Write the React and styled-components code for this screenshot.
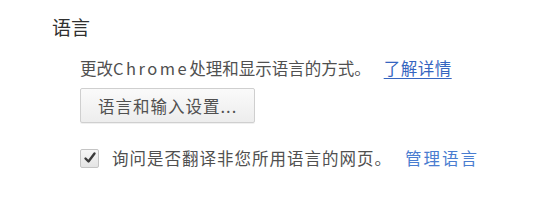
import styled, { createGlobalStyle } from 'styled-components';

const GlobalStyle = createGlobalStyle`
  html, body {
    margin: 0;
    padding: 0;
    background: #ffffff;
  }
  body {
    font-family: "Noto Sans CJK SC", "Noto Sans", sans-serif;
    color: #444;
  }
`

const Section = styled.section`
  padding: 16px 0 0 52px;
`

const SectionTitle = styled.h3`
  margin: 0;
  font-size: 19px;
  line-height: 22px;
  font-weight: normal;
  color: #303030;
`

const SectionBody = styled.div`
  padding-left: 28px;
  display: flex;
  flex-direction: column;
  align-items: flex-start;
`

const Text = styled.div`
  margin-top: 18px;
  font-size: 16.5px;
  line-height: 24px;
  color: #505050;
  white-space: nowrap;
`

const Latin = styled.span`
  letter-spacing: 2.5px;
`

const Link = styled.a`
  color: ${props => props.$light ? '#4a7dd0' : '#3565c0'};
  text-decoration: ${props => props.$underline ? 'underline' : 'none'};
  text-underline-offset: 3px;
  margin-left: ${props => props.$gap || 10}px;
  letter-spacing: ${props => props.$spacing || 0}px;
  cursor: pointer;
`

const Button = styled.button`
  margin-top: 8px;
  height: 35px;
  padding: 0 17px;
  border: 1px solid #cfcfcf;
  border-radius: 2px;
  background: linear-gradient(#fafafa, #ededed);
  box-shadow: 0 1px 0 rgba(0, 0, 0, 0.06);
  font-family: inherit;
  font-size: 16.5px;
  color: #505050;
  letter-spacing: 1px;
`

const CheckRow = styled.label`
  margin-top: 24px;
  display: flex;
  align-items: center;
  gap: 13px;
  font-size: 16.5px;
  line-height: 22px;
  color: #505050;
  white-space: nowrap;
  letter-spacing: 1px;
`

const Box = styled.span`
  width: 17px;
  height: 17px;
  border: 1px solid #c4c4c4;
  border-radius: 2px;
  background: linear-gradient(#f6f6f6, #e4e4e4);
  display: flex;
  align-items: center;
  justify-content: center;
`

const CheckBox = () => (
  <Box>
    <svg width="14" height="14" viewBox="0 0 14 14">
      <path d="M2.5 7.5 L5.5 10.5 L11.5 2.5" fill="none" stroke="#3a3a3a" strokeWidth="2.4" strokeLinecap="round" strokeLinejoin="round" />
    </svg>
  </Box>
)

export default function App() {
  return (
    <>
      <GlobalStyle />
      <Section>
        <SectionTitle>语言</SectionTitle>
        <SectionBody>
          <Text>
            更改<Latin>Chrome</Latin>处理和显示语言的方式。
            <Link $underline $gap={13} $spacing={0.5}>了解详情</Link>
          </Text>
          <Button>语言和输入设置...</Button>
          <CheckRow>
            <CheckBox />
            <span>
              询问是否翻译非您所用语言的网页。
              <Link $light $gap={13} $spacing={2}>管理语言</Link>
            </span>
          </CheckRow>
        </SectionBody>
      </Section>
    </>
  );
}
